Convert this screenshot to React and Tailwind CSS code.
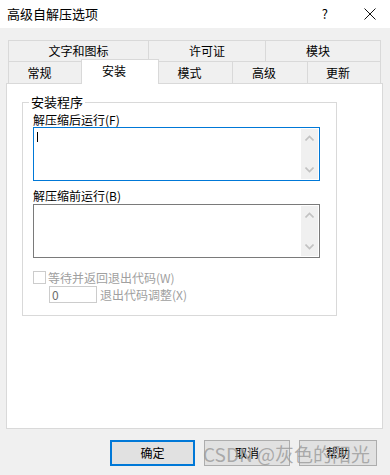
const font = "font-['Microsoft_YaHei','Noto_Sans_CJK_SC',sans-serif]";

const Chevron = ({ up }) => (
  <svg width="9" height="6" viewBox="0 0 9 6" className="block">
    <path
      d={up ? "M0.5 5.5 L4.5 1.5 L8.5 5.5" : "M0.5 0.5 L4.5 4.5 L8.5 0.5"}
      fill="none"
      stroke="#c2c2c2"
      strokeWidth="1.6"
    />
  </svg>
);

const TextBox = ({ focused, caret }) => (
  <div
    className={`relative flex h-[54px] w-[287px] bg-white p-px border ${
      focused ? "border-[#0078d7]" : "border-[#7a7a7a]"
    }`}
  >
    <div className="flex-1 pl-[2px] pt-[3px]">
      {caret && <div className="h-[10px] w-px bg-black" />}
    </div>
    <div className="flex w-[17px] flex-col items-center justify-between bg-[#f0f0f0] py-[6px]">
      <Chevron up />
      <Chevron />
    </div>
  </div>
);

const Tab = ({ label, w, cls = "" }) => (
  <div
    className={`flex items-center justify-center border-l border-t border-[#d9d9d9] bg-[#f0f0f0] ${w} ${cls}`}
  >
    {label}
  </div>
);

export default function App() {
  return (
    <div className={`relative h-[475px] w-[390px] overflow-hidden bg-[#f0f0f0] text-[12px] text-black ${font}`}>
      {/* title bar */}
      <div className="flex h-[28px] items-center bg-white pl-[7px] pr-[14px]">
        <span className="flex-1 leading-[14px] text-[13px]">高级自解压选项</span>
        <span className="mr-[36px] text-[13px] leading-[14px]">?</span>
        <svg width="12" height="12" viewBox="0 0 12 12">
          <path d="M0.5 0.5 L11.5 11.5 M11.5 0.5 L0.5 11.5" stroke="#111" strokeWidth="1" />
        </svg>
      </div>

      {/* tabs */}
      <div className="mt-[12px] ml-[8px] flex h-[21px] w-[373px] leading-[14px]">
        <Tab label="文字和图标" w="w-[140px]" />
        <Tab label="许可证" w="w-[117px]" />
        <Tab label="模块" w="w-[116px] pr-[10px]" cls="border-r" />
      </div>
      <div className="ml-[8px] flex h-[22px] w-[373px] items-end leading-[14px]">
        <Tab label="常规" w="h-[22px] w-[73px] pr-[11px]" />
        <div className="relative z-10 -mb-px flex h-[25px] w-[78px] items-center justify-center border-l border-r border-t border-[#d9d9d9] bg-white pr-[12px] pb-[2px]">
          安装
        </div>
        <Tab label="模式" w="h-[22px] w-[73px] pr-[12px]" cls="border-l-0" />
        <Tab label="高级" w="h-[22px] w-[75px] pr-[12px]" />
        <Tab label="更新" w="h-[22px] w-[74px] pr-[12px]" cls="border-r" />
      </div>

      {/* panel */}
      <div className="ml-[6px] h-[346px] w-[377px] border border-[#d9d9d9] bg-white">
        <fieldset className="mt-[10px] ml-[15px] w-[315px] border border-[#d9d9d9] pl-[10px] pt-[3px] pb-[12px]">
          <legend className="-ml-[4px] px-[2px] leading-[16px] text-[13px]">安装程序</legend>
          <div className="h-[14px] leading-[14px]">解压缩后运行(F)</div>
          <TextBox focused caret />
          <div className="mt-[8px] h-[14px] leading-[14px]">解压缩前运行(B)</div>
          <div className="mt-px">
            <TextBox />
          </div>
          <div className="mt-[13px] flex h-[13px] items-center text-[#a0a0a0]">
            <div className="h-[13px] w-[13px] border border-[#cccccc] bg-white" />
            <span className="ml-[2px] leading-[13px]">等待并返回退出代码(W)</span>
          </div>
          <div className="mt-[2px] flex h-[17px] items-center">
            <div className="ml-[16px] flex h-[17px] w-[48px] items-center border border-[#cccccc] bg-white pl-[2px] leading-[12px] text-[#6d6d6d]">
              0
            </div>
            <span className="ml-[3px] leading-[13px] text-[#a0a0a0]">退出代码调整(X)</span>
          </div>
        </fieldset>
      </div>

      {/* buttons */}
      <div className="mt-[11px] flex justify-end gap-[9px] pr-[13px] leading-[14px]">
        <button className="flex h-[26px] w-[85px] items-center justify-center border-2 border-[#0078d7] bg-[#e1e1e1]">
          确定
        </button>
        <button className="flex h-[26px] w-[86px] items-center justify-center border border-[#adadad] bg-[#e1e1e1]">
          取消
        </button>
        <button className="flex h-[26px] w-[78px] items-center justify-center border border-[#adadad] bg-[#e1e1e1]">
          帮助
        </button>
      </div>

      {/* watermark */}
      <div className="pointer-events-none absolute left-[203px] top-[442px] whitespace-nowrap text-[19px] leading-[24px] text-[#9a9a9a]/80 font-['Noto_Sans_CJK_SC',sans-serif]">
        CSDN @灰色的阳光
      </div>
    </div>
  );
}
